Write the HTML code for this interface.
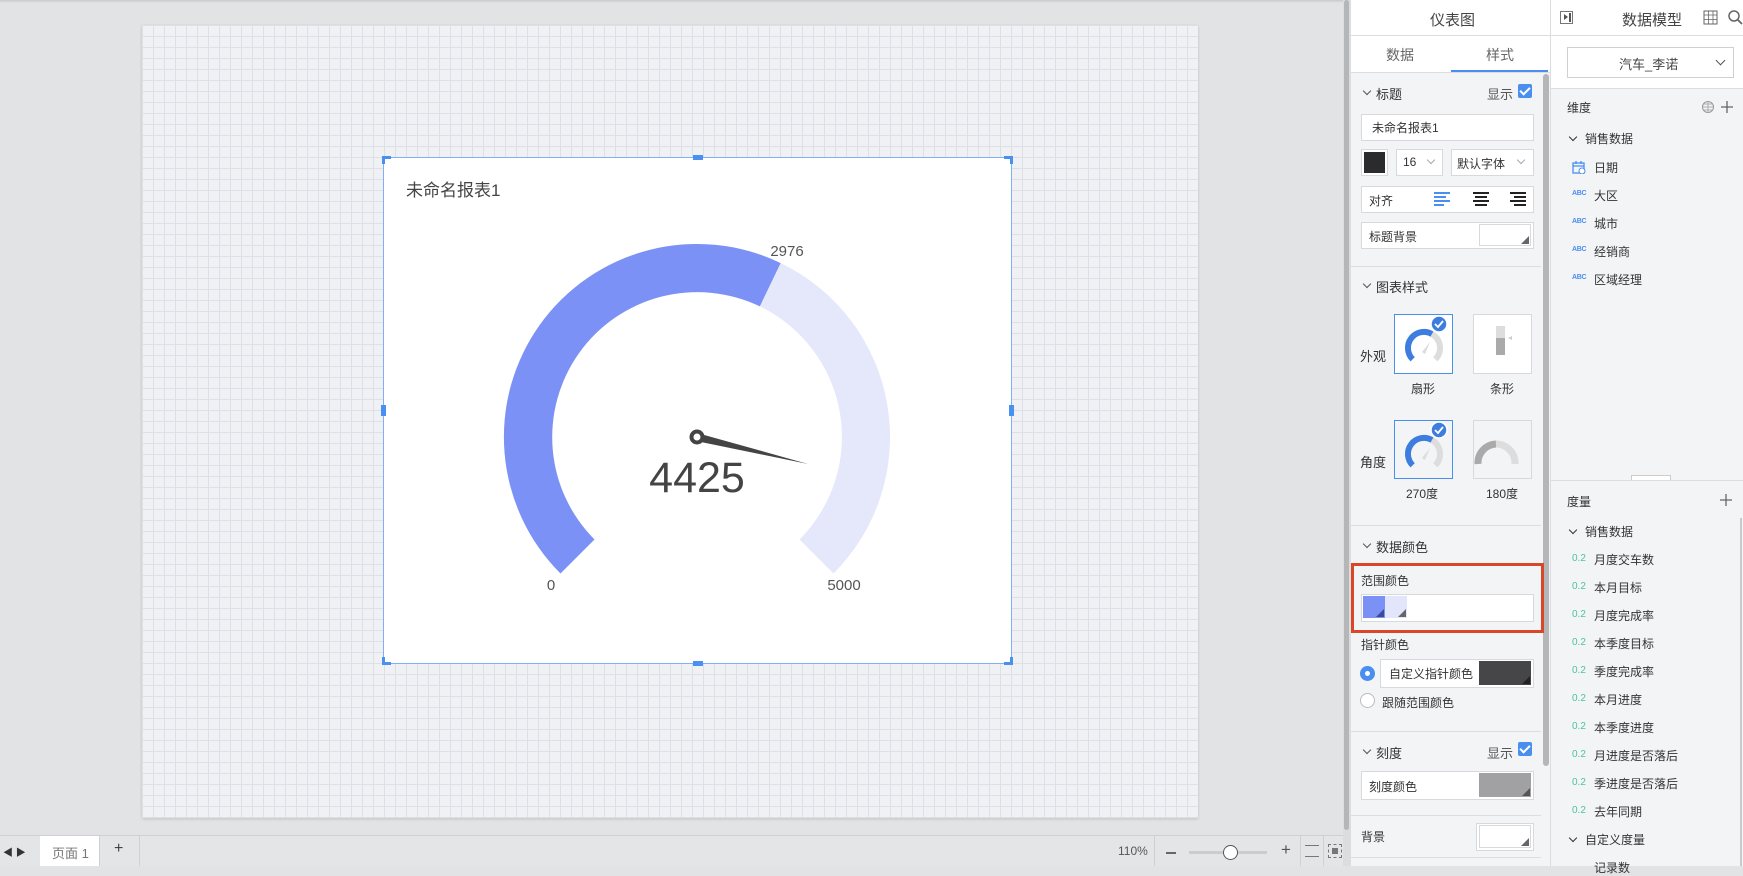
<!DOCTYPE html>
<html><head><meta charset="utf-8"><style>
*{box-sizing:border-box;margin:0;padding:0}
body{width:1743px;height:866px;overflow:hidden;position:relative;background:#e2e3e5;font-family:"Liberation Sans","Noto Sans CJK SC",sans-serif;color:#333;font-size:13px}
.a{position:absolute}
.paper{left:142px;top:25px;width:1056px;height:793px;background-color:#f0f1f4;background-image:linear-gradient(#dfe0e5 1px,transparent 1px),linear-gradient(90deg,#dfe0e5 1px,transparent 1px);background-size:11px 11px;box-shadow:0 1px 3px rgba(0,0,0,.15)}
.chart{left:383px;top:157px;width:629px;height:507px;background:#fff;border:1px solid #7fb0f5}
.h{position:absolute;background:#4a90f0}
.box{position:absolute;background:#fff;border:1px solid #d8d9dc}
.t{position:absolute;white-space:nowrap}
.sep{position:absolute;left:1351px;width:190px;height:1px;background:#dcdde0}
.chk{position:absolute;width:14px;height:14px;background:#4a8ef0;border-radius:2px}
.chk:after{content:"";position:absolute;left:4px;top:1px;width:4px;height:8px;border:solid #fff;border-width:0 2px 2px 0;transform:rotate(45deg)}
.chev{position:absolute;width:6px;height:6px;border:solid #555;border-width:0 1.5px 1.5px 0;transform:rotate(45deg)}
.tri{position:absolute;right:1px;bottom:1px;width:0;height:0;border-left:8px solid transparent;border-bottom:8px solid #666}
.abc{position:absolute;font-size:7px;color:#4a8ef0;font-weight:bold;letter-spacing:-.3px}
.num{position:absolute;font-size:10px;color:#4cc3a3}
.it{position:absolute;font-size:12px;color:#333}
</style></head><body>
<div class="a" style="left:0;top:0;width:1343px;height:3px;background:linear-gradient(#c8c9cc,#e2e3e5)"></div>
<div class="a paper"></div>
<div class="a chart"></div>
<div class="h" style="left:383px;top:156px;width:8px;height:3px"></div><div class="h" style="left:382px;top:156px;width:3px;height:8px"></div>
<div class="h" style="left:1004px;top:156px;width:9px;height:3px"></div><div class="h" style="left:1010px;top:156px;width:3px;height:8px"></div>
<div class="h" style="left:383px;top:662px;width:8px;height:3px"></div><div class="h" style="left:382px;top:657px;width:3px;height:8px"></div>
<div class="h" style="left:1004px;top:662px;width:9px;height:3px"></div><div class="h" style="left:1010px;top:657px;width:3px;height:8px"></div>
<div class="h" style="left:693px;top:155px;width:10px;height:5px"></div><div class="h" style="left:693px;top:661px;width:10px;height:5px"></div>
<div class="h" style="left:381px;top:405px;width:5px;height:11px"></div><div class="h" style="left:1009px;top:405px;width:5px;height:11px"></div>
<div class="t" style="left:406px;top:176px;font-size:17px;color:#444">未命名报表1</div>
<svg class="a" style="left:0;top:0" width="1343" height="835">
<path d="M560.5,573.5 A193,193 0 0 1 780.7,263.1 L759.9,306.4 A145,145 0 0 0 594.5,539.5 Z" fill="#7b91f5"/>
<path d="M780.7,263.1 A193,193 0 0 1 833.5,573.5 L799.5,539.5 A145,145 0 0 0 759.9,306.4 Z" fill="#e5e8fa"/>
<polygon points="697,433 808,464 696,441" fill="#444"/>
<circle cx="697" cy="437" r="5.5" fill="#fff" stroke="#444" stroke-width="4"/>
<text x="697" y="492" font-size="43" text-anchor="middle" fill="#444" font-family="Liberation Sans,sans-serif">4425</text>
<text x="787" y="256" font-size="15" text-anchor="middle" fill="#555" font-family="Liberation Sans,sans-serif">2976</text>
<text x="551" y="590" font-size="15" text-anchor="middle" fill="#555" font-family="Liberation Sans,sans-serif">0</text>
<text x="844" y="590" font-size="15" text-anchor="middle" fill="#555" font-family="Liberation Sans,sans-serif">5000</text>
</svg>
<div class="a" style="left:0;top:835px;width:1343px;height:31px;background:#e4e5e7;border-top:1px solid #cfd0d3"></div>
<div class="t" style="left:3px;top:844px;font-size:10px;color:#333">◀ ▶</div>
<div class="a" style="left:40px;top:836px;width:59px;height:30px;background:#fff"></div>
<div class="t" style="left:52px;top:843px;font-size:13px;color:#777">页面 1</div>
<div class="a" style="left:99px;top:836px;width:1px;height:30px;background:#cfd0d3"></div>
<div class="t" style="left:114px;top:840px;font-size:16px;color:#444">+</div>
<div class="a" style="left:139px;top:836px;width:1px;height:30px;background:#cfd0d3"></div>
<div class="t" style="left:1118px;top:844px;font-size:12px;color:#555">110%</div>
<div class="a" style="left:1154px;top:836px;width:1px;height:30px;background:#cfd0d3"></div>
<div class="a" style="left:1166px;top:852px;width:10px;height:1.5px;background:#666"></div>
<div class="a" style="left:1189px;top:851px;width:78px;height:3px;background:#ccc"></div>
<div class="a" style="left:1223px;top:845px;width:15px;height:15px;border-radius:50%;background:#fff;border:1.5px solid #555"></div>
<div class="t" style="left:1281px;top:840px;font-size:17px;color:#555">+</div>
<div class="a" style="left:1300px;top:836px;width:1px;height:30px;background:#cfd0d3"></div>
<div class="a" style="left:1305px;top:845px;width:14px;height:12px;border-top:1.5px solid #777;border-bottom:1.5px solid #777"></div>
<div class="a" style="left:1323px;top:836px;width:1px;height:30px;background:#cfd0d3"></div>
<div class="a" style="left:1328px;top:844px;width:14px;height:14px;border:1.5px dashed #777"></div><div class="a" style="left:1332px;top:848px;width:6px;height:6px;background:#777"></div>
<div class="a" style="left:1343px;top:0;width:8px;height:866px;background:#dcdddf"></div>
<div class="a" style="left:1344px;top:0;width:5px;height:830px;background:#b5b6b8;border-radius:3px"></div>
<div class="a" style="left:1351px;top:0;width:200px;height:866px;background:#f3f4f6"></div>
<div class="a" style="left:1351px;top:0;width:200px;height:72px;background:#fff"></div>
<div class="a" style="left:1351px;top:35px;width:200px;height:1px;background:#dcdde0"></div>
<div class="t" style="left:1430px;top:9px;font-size:15px;color:#444">仪表图</div>
<div class="t" style="left:1386px;top:45px;font-size:14px;color:#666">数据</div>
<div class="t" style="left:1486px;top:45px;font-size:14px;color:#666">样式</div>
<div class="a" style="left:1451px;top:70px;width:97px;height:2px;background:#4a8ef0"></div>
<div class="a" style="left:1351px;top:72px;width:200px;height:1px;background:#dcdde0"></div>
<div class="a" style="left:1543px;top:74px;width:6px;height:692px;background:#b5b6b8;border-radius:3px"></div>
<div class="a" style="left:1550px;top:0;width:1px;height:866px;background:#dcdde0"></div>

<div class="chev" style="left:1364px;top:88px"></div>
<div class="t" style="left:1376px;top:84px;font-size:13px">标题</div>
<div class="t" style="left:1487px;top:84px;font-size:13px;color:#555">显示</div>
<div class="chk" style="left:1518px;top:84px"></div>
<div class="box" style="left:1361px;top:114px;width:173px;height:27px"></div>
<div class="t" style="left:1372px;top:119px;font-size:12px">未命名报表1</div>
<div class="box" style="left:1361px;top:149px;width:27px;height:27px"></div>
<div class="a" style="left:1364px;top:152px;width:21px;height:21px;background:#2b2b2d"></div>
<div class="box" style="left:1396px;top:149px;width:47px;height:27px"></div>
<div class="t" style="left:1403px;top:155px;font-size:12px">16</div>
<div class="chev" style="left:1428px;top:157px;border-color:#aaa"></div>
<div class="box" style="left:1451px;top:149px;width:83px;height:27px"></div>
<div class="t" style="left:1457px;top:155px;font-size:12px">默认字体</div>
<div class="chev" style="left:1518px;top:157px;border-color:#aaa"></div>
<div class="box" style="left:1361px;top:186px;width:173px;height:27px"></div>
<div class="t" style="left:1369px;top:192px;font-size:12px">对齐</div>
<svg class="a" style="left:1430px;top:191px" width="100" height="16"><g stroke-width="2"><g stroke="#4a8ef0"><line x1="4" y1="2" x2="20" y2="2"/><line x1="4" y1="6" x2="16" y2="6"/><line x1="4" y1="10" x2="20" y2="10"/><line x1="4" y1="14" x2="14" y2="14"/></g><g stroke="#222"><line x1="43" y1="2" x2="59" y2="2"/><line x1="45" y1="6" x2="57" y2="6"/><line x1="43" y1="10" x2="59" y2="10"/><line x1="45" y1="14" x2="57" y2="14"/><line x1="80" y1="2" x2="96" y2="2"/><line x1="84" y1="6" x2="96" y2="6"/><line x1="80" y1="10" x2="96" y2="10"/><line x1="84" y1="14" x2="96" y2="14"/></g></g></svg>
<div class="box" style="left:1361px;top:222px;width:173px;height:27px"></div>
<div class="t" style="left:1369px;top:228px;font-size:12px">标题背景</div>
<div class="box" style="left:1479px;top:224px;width:52px;height:22px"><div class="tri"></div></div>
<div class="sep" style="top:266px"></div>

<div class="chev" style="left:1364px;top:281px"></div>
<div class="t" style="left:1376px;top:277px;font-size:13px">图表样式</div>
<div class="t" style="left:1360px;top:346px;font-size:13px">外观</div>
<div class="box" style="left:1394px;top:314px;width:59px;height:60px;border:1.5px solid #4a8ef0"></div>
<div class="box" style="left:1473px;top:314px;width:59px;height:60px"></div>
<svg class="a" style="left:1394px;top:314px" width="140" height="170">
<path d="M18.7,45.3 A16,16 0 0 1 38,20.1" stroke="#3d7de0" stroke-width="6" fill="none"/>
<path d="M38,20.1 A16,16 0 0 1 41.3,45.3" stroke="#ddd" stroke-width="6" fill="none"/>
<path d="M36,28 L28,38 L31,40 Z" fill="#ddd"/>
<circle cx="45" cy="10" r="8" fill="#3d7de0" stroke="#fff" stroke-width="1.5"/><path d="M41,10 l3,3 l5,-6" stroke="#fff" stroke-width="1.8" fill="none"/>
<rect x="102" y="12" width="9" height="12" fill="#ddd"/><rect x="102" y="24" width="9" height="17" fill="#aaa"/><path d="M118,22 l-4,2 l4,2z" fill="#ccc"/>
<path d="M18.7,151.3 A16,16 0 0 1 38,126.1" stroke="#3d7de0" stroke-width="6" fill="none"/>
<path d="M38,126.1 A16,16 0 0 1 41.3,151.3" stroke="#ddd" stroke-width="6" fill="none"/>
<path d="M36,134 L28,144 L31,146 Z" fill="#ddd"/>
<circle cx="45" cy="116" r="8" fill="#3d7de0" stroke="#fff" stroke-width="1.5"/><path d="M41,116 l3,3 l5,-6" stroke="#fff" stroke-width="1.8" fill="none"/>
<path d="M84,150 A19,19 0 0 1 102,130" stroke="#aaa" stroke-width="7" fill="none"/>
<path d="M102,130 A19,19 0 0 1 121,150" stroke="#ddd" stroke-width="7" fill="none"/>
</svg>
<div class="t" style="left:1411px;top:380px;font-size:12px">扇形</div>
<div class="t" style="left:1490px;top:380px;font-size:12px">条形</div>
<div class="t" style="left:1360px;top:452px;font-size:13px">角度</div>
<div class="box" style="left:1394px;top:420px;width:59px;height:59px;border:1.5px solid #4a8ef0;background:transparent"></div>
<div class="box" style="left:1473px;top:420px;width:59px;height:59px;background:transparent"></div>
<div class="t" style="left:1406px;top:485px;font-size:12px">270度</div>
<div class="t" style="left:1486px;top:485px;font-size:12px">180度</div>
<div class="sep" style="top:525px"></div>

<div class="chev" style="left:1364px;top:541px"></div>
<div class="t" style="left:1376px;top:537px;font-size:13px">数据颜色</div>
<div class="a" style="left:1351px;top:563px;width:193px;height:70px;border:3px solid #d9472b"></div>
<div class="t" style="left:1361px;top:572px;font-size:12px">范围颜色</div>
<div class="box" style="left:1361px;top:594px;width:173px;height:28px"></div>
<div class="a" style="left:1363px;top:596px;width:22px;height:22px;background:#7b91f5"><div class="tri" style="border-bottom-color:#3a4a9a"></div></div>
<div class="a" style="left:1385px;top:596px;width:22px;height:22px;background:#e3e6fa"><div class="tri"></div></div>
<div class="t" style="left:1361px;top:636px;font-size:12px">指针颜色</div>
<div class="a" style="left:1360px;top:666px;width:15px;height:15px;border-radius:50%;background:#4a8ef0"></div>
<div class="a" style="left:1365px;top:671px;width:5px;height:5px;border-radius:50%;background:#fff"></div>
<div class="box" style="left:1380px;top:659px;width:154px;height:29px"></div>
<div class="t" style="left:1389px;top:665px;font-size:12px">自定义指针颜色</div>
<div class="a" style="left:1479px;top:661px;width:52px;height:24px;background:#464649"><div class="tri" style="border-bottom-color:#222"></div></div>
<div class="a" style="left:1360px;top:693px;width:15px;height:15px;border-radius:50%;background:#fff;border:1px solid #bbb"></div>
<div class="t" style="left:1382px;top:694px;font-size:12px">跟随范围颜色</div>
<div class="sep" style="top:731px"></div>

<div class="chev" style="left:1364px;top:747px"></div>
<div class="t" style="left:1376px;top:743px;font-size:13px">刻度</div>
<div class="t" style="left:1487px;top:743px;font-size:13px;color:#555">显示</div>
<div class="chk" style="left:1518px;top:742px"></div>
<div class="box" style="left:1361px;top:771px;width:173px;height:29px"></div>
<div class="t" style="left:1369px;top:778px;font-size:12px">刻度颜色</div>
<div class="a" style="left:1479px;top:773px;width:52px;height:24px;background:#a1a1a3"><div class="tri" style="border-bottom-color:#555"></div></div>
<div class="sep" style="top:815px"></div>
<div class="t" style="left:1361px;top:828px;font-size:12px">背景</div>
<div class="box" style="left:1476px;top:823px;width:58px;height:28px"></div>
<div class="box" style="left:1479px;top:825px;width:52px;height:23px"><div class="tri"></div></div>
<div class="sep" style="top:857px"></div>

<div class="a" style="left:1551px;top:0;width:192px;height:866px;background:#f3f4f6"></div>
<div class="a" style="left:1551px;top:0;width:192px;height:89px;background:#fff"></div>
<div class="a" style="left:1551px;top:35px;width:192px;height:1px;background:#dcdde0"></div>
<div class="a" style="left:1560px;top:11px;width:13px;height:13px;border:1px solid #777"></div>
<div class="a" style="left:1564px;top:14px;width:0;height:0;border-left:4px solid #555;border-top:3.5px solid transparent;border-bottom:3.5px solid transparent"></div>
<div class="a" style="left:1569px;top:13px;width:1.5px;height:9px;background:#555"></div>
<div class="t" style="left:1622px;top:9px;font-size:15px;color:#444">数据模型</div>
<svg class="a" style="left:1703px;top:10px" width="40" height="16"><rect x="1" y="1" width="13" height="13" fill="none" stroke="#666"/><path d="M1,5 h13 M1,9.5 h13 M5.5,1 v13 M10,1 v13" stroke="#666" stroke-width=".8"/><circle cx="31" cy="6" r="5" fill="none" stroke="#666" stroke-width="1.5"/><path d="M34.5,9.5 L39,14" stroke="#666" stroke-width="1.8"/></svg>
<div class="box" style="left:1567px;top:47px;width:167px;height:31px;border-color:#cfd0d3"></div>
<div class="t" style="left:1619px;top:54px;font-size:13px;color:#444">汽车_李诺</div>
<div class="chev" style="left:1717px;top:57px;border-color:#555;width:7px;height:7px"></div>
<div class="a" style="left:1551px;top:88px;width:192px;height:1px;background:#dcdde0"></div>
<div class="t" style="left:1567px;top:99px;font-size:12px">维度</div>
<svg class="a" style="left:1700px;top:99px" width="40" height="16"><circle cx="8" cy="8" r="5.5" fill="none" stroke="#999"/><path d="M2.5,8 h11 M8,2.5 v11 M3.5,5 h9 M3.5,11 h9" stroke="#999" stroke-width=".7"/><path d="M27,2 v12 M21,8 h12" stroke="#666" stroke-width="1.3"/></svg>
<div class="chev" style="left:1570px;top:134px;border-color:#333"></div>
<div class="t" style="left:1585px;top:130px;font-size:12px">销售数据</div>
<svg class="a" style="left:1572px;top:160px" width="14" height="14"><rect x="1" y="3" width="11" height="10" fill="none" stroke="#4a8ef0" stroke-width="1.3"/><path d="M1,6 h11 M4,1 v3 M9,1 v3" stroke="#4a8ef0" stroke-width="1.3"/><circle cx="10" cy="11" r="3" fill="#fff" stroke="#4a8ef0"/></svg>
<div class="it" style="left:1594px;top:159px">日期</div>
<div class="abc" style="left:1572px;top:190px">ABC</div><div class="it" style="left:1594px;top:187px">大区</div>
<div class="abc" style="left:1572px;top:218px">ABC</div><div class="it" style="left:1594px;top:215px">城市</div>
<div class="abc" style="left:1572px;top:246px">ABC</div><div class="it" style="left:1594px;top:243px">经销商</div>
<div class="abc" style="left:1572px;top:274px">ABC</div><div class="it" style="left:1594px;top:271px">区域经理</div>
<div class="a" style="left:1551px;top:480px;width:192px;height:1px;background:#dcdde0"></div>
<div class="a" style="left:1631px;top:475px;width:40px;height:5px;border:1px solid #ccc;border-bottom:none;background:#fff"></div>
<div class="t" style="left:1567px;top:493px;font-size:12px">度量</div>
<svg class="a" style="left:1718px;top:492px" width="16" height="16"><path d="M8,2 v12 M2,8 h12" stroke="#666" stroke-width="1.3"/></svg>
<div class="a" style="left:1740px;top:518px;width:2px;height:348px;background:#c9cacc"></div>
<div class="chev" style="left:1570px;top:527px;border-color:#333"></div>
<div class="t" style="left:1585px;top:523px;font-size:12px">销售数据</div>
<div class="num" style="left:1572px;top:553px">0.2</div><div class="it" style="left:1594px;top:551px">月度交车数</div>
<div class="num" style="left:1572px;top:581px">0.2</div><div class="it" style="left:1594px;top:579px">本月目标</div>
<div class="num" style="left:1572px;top:609px">0.2</div><div class="it" style="left:1594px;top:607px">月度完成率</div>
<div class="num" style="left:1572px;top:637px">0.2</div><div class="it" style="left:1594px;top:635px">本季度目标</div>
<div class="num" style="left:1572px;top:665px">0.2</div><div class="it" style="left:1594px;top:663px">季度完成率</div>
<div class="num" style="left:1572px;top:693px">0.2</div><div class="it" style="left:1594px;top:691px">本月进度</div>
<div class="num" style="left:1572px;top:721px">0.2</div><div class="it" style="left:1594px;top:719px">本季度进度</div>
<div class="num" style="left:1572px;top:749px">0.2</div><div class="it" style="left:1594px;top:747px">月进度是否落后</div>
<div class="num" style="left:1572px;top:777px">0.2</div><div class="it" style="left:1594px;top:775px">季进度是否落后</div>
<div class="num" style="left:1572px;top:805px">0.2</div><div class="it" style="left:1594px;top:803px">去年同期</div>
<div class="chev" style="left:1570px;top:835px;border-color:#333"></div>
<div class="t" style="left:1585px;top:831px;font-size:12px">自定义度量</div>
<div class="it" style="left:1594px;top:859px">记录数</div>
</body></html>
